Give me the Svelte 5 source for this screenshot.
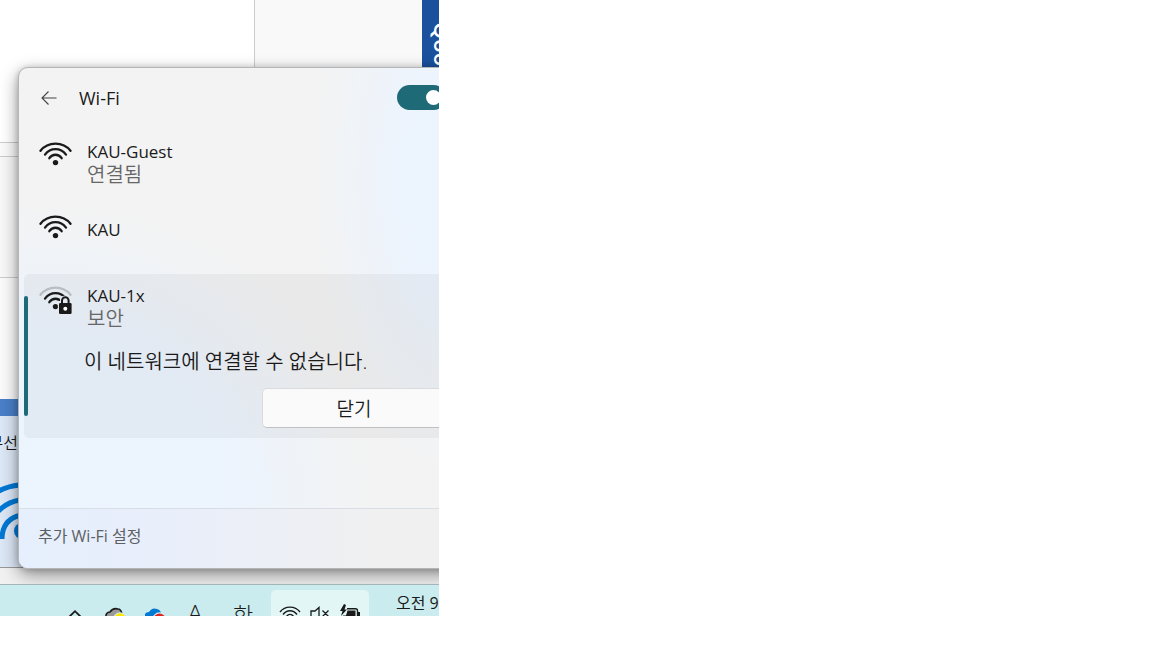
<script>
    let wifiOn = true;
    let errorOpen = true;

    const networks = [
        { name: "KAU-Guest", status: "연결됨" },
        { name: "KAU", status: "" }
    ];
</script>

<svelte:head>
    <title>Wi-Fi</title>
</svelte:head>

{#snippet wifi(weak)}
    <svg class="wifi-icon" viewBox="0 0 34 32" aria-hidden="true">
        <g fill="none" stroke="#1a1a1a" stroke-width="2.3" stroke-linecap="round">
            <path d="M1.500 10.8C9 1.300 24 1.300 31.500 10.8" stroke={weak ? "#b9bdc3" : "#1a1a1a"} />
            <path d="M6 14.6C11.500 7.400 21.500 7.400 27 14.6" />
            <path d="M10.300 18.2C13.500 13.600 19.500 13.600 22.700 18.2" />
        </g>
        <circle cx="16.500" cy="22.6" r="2.7" fill="#1a1a1a" />
        {#if weak}
            <path d="M18.800 17H21V14.5Q21.500 12 26 11.5L34 13V32H19Z" fill="#e4e9f2" />
            <path d="M23 20V16.5a3.3 3.3 0 0 1 6.6 0V20" fill="none" stroke="#1a1a1a" stroke-width="2" />
            <rect x="20" y="19" width="12.6" height="11" rx="1.2" fill="#1a1a1a" />
            <circle cx="26.3" cy="24.7" r="2" fill="#fff" />
        {/if}
    </svg>
{/snippet}

<main class="screen">
    <div class="desktop">
        <div class="windows">
            <div class="page">
                <div class="blank"></div>
                <div class="side"><div class="banner">Qoo</div></div>
            </div>
            <div class="strip"></div>
            <div class="pane"></div>
            <div class="pane lower"></div>
            <div class="bar"></div>
            <div class="popup">
                <span>무선</span>
                <svg viewBox="0 0 80 60" aria-hidden="true">
                    <g fill="none" stroke="#0078d4" stroke-width="5">
                        <path d="M6 20C16 10 28 4 42 3" />
                        <path d="M14 38C20 27 30 20 42 18" />
                        <path d="M24 57C24 45 30 36 43 33" />
                    </g>
                    <circle cx="44" cy="49" r="8" fill="#0078d4" />
                </svg>
            </div>
        </div>

        <section class="flyout">
            <header>
                <button class="back" aria-label="뒤로">
                    <svg viewBox="0 0 16 16" aria-hidden="true">
                        <path d="M15.5 8H1M7.5 1.5L1 8l6.5 6.5" fill="none" stroke="#444" stroke-width="1.1" />
                    </svg>
                </button>
                <label for="wifi-toggle">Wi-Fi</label>
                <input id="wifi-toggle" type="checkbox" role="switch" bind:checked={wifiOn} />
            </header>

            <ul>
                {#each networks as network}
                    <li class="network">
                        {@render wifi(false)}
                        <div class="info" class:single={!network.status}>
                            <span class="name">{network.name}</span>
                            {#if network.status}<span class="status">{network.status}</span>{/if}
                        </div>
                    </li>
                {/each}
                <li class="network selected">
                    {@render wifi(true)}
                    <div class="info">
                        <span class="name">KAU-1x</span>
                        <span class="status">보안</span>
                    </div>
                    {#if errorOpen}
                        <p>이 네트워크에 연결할 수 없습니다.</p>
                        <button class="close" on:click={() => (errorOpen = false)}>닫기</button>
                    {/if}
                </li>
            </ul>

            <footer><a href="#settings">추가 Wi-Fi 설정</a></footer>
        </section>
    </div>

    <nav class="taskbar">
        <button class="tray" aria-label="숨겨진 아이콘 표시">
            <svg viewBox="0 0 24 32" aria-hidden="true">
                <path d="M5 33l7-6.8 7 6.8" fill="none" stroke="#1a1a1a" stroke-width="1.8" />
            </svg>
        </button>
        <button class="tray" aria-label="클라우드">
            <svg viewBox="0 0 24 32" aria-hidden="true">
                <path d="M3 34v-4q1-3 4-3q3-4.500 8-3q3 0 4 5v5z" fill="#999" stroke="#1a1a1a" stroke-width="1.6" />
                <circle cx="17" cy="34" r="6.800" fill="#cdeeee" />
                <circle cx="17" cy="34" r="5.800" fill="#ffe600" />
            </svg>
        </button>
        <button class="tray" aria-label="OneDrive">
            <svg viewBox="0 0 24 32" aria-hidden="true">
                <path d="M2 34v-5q1-2 4-2q3-5 8-3q4 1 4 5v5z" fill="#0078d4" />
                <circle cx="16.500" cy="34.500" r="7.200" fill="#cdeeee" />
                <circle cx="16.500" cy="34.500" r="6" fill="#dc2626" />
                <path d="M14 31l5 5m0-5l-5 5" stroke="#fff" stroke-width="1" />
            </svg>
        </button>
        <button class="tray latin">A</button>
        <button class="tray hangul">한</button>
        <button class="quick" aria-label="네트워크, 볼륨, 배터리">
            <svg viewBox="0 0 22 26" aria-hidden="true">
                <g fill="none" stroke="#1a1a1a" stroke-width="1.400">
                    <path d="M1 22C6 15.500 16 15.500 21 22" />
                    <path d="M4 24.500C8 19.500 14 19.500 18 24.500" />
                    <path d="M7 27C9.500 23.500 12.500 23.500 15 27" />
                </g>
            </svg>
            <svg viewBox="0 0 22 26" aria-hidden="true">
                <path d="M2 27v-6h4l4-3.500V27M13.500 20.500l6 6m0-6l-6 6" fill="none" stroke="#1a1a1a" stroke-width="1.300" />
            </svg>
            <svg viewBox="0 0 22 26" aria-hidden="true">
                <path d="M8 18.700h8.500q2 0 2 2V27" fill="none" stroke="#1a1a1a" stroke-width="1.400" />
                <path d="M8.500 20.500h8V27H4v-1.500h3zM19 22h2v5h-2z" fill="#1a1a1a" />
                <path d="M5 14L1 21h2.500L2 26l6-6.500H5.500L7 15z" fill="#1a1a1a" />
            </svg>
        </button>
        <time>오전 9</time>
    </nav>
</main>

<style>
    :global(body) {
        margin: 0;
        background: #fff;
    }
    .screen {
        max-width: 439px;
        overflow: hidden;
        font-family: "Open Sans", "Noto Sans CJK KR", sans-serif;
        color: #1a1a1a;
    }
    button, input {
        margin: 0;
        padding: 0;
        border: 0;
        background: none;
        font: inherit;
        color: inherit;
    }
    svg {
        display: block;
    }
    .desktop {
        position: relative;
        padding: 67px 0 15px 18px;
        border-bottom: 1px solid #a3b5b7;
        background: #f1f1f1;
        overflow: hidden;
    }
    .windows {
        position: absolute;
        inset: 0;
        display: flex;
        flex-direction: column;
    }
    .page {
        display: flex;
        height: 142px;
        background: #fff;
    }
    .blank {
        flex: 0 0 254px;
    }
    .side {
        display: flex;
        flex: 1;
        justify-content: flex-end;
        border-left: 1px solid #ccc;
        background: #f9f9f9;
    }
    .banner {
        box-sizing: border-box;
        width: 17px;
        padding: 22px 0 0 7px;
        background: #1a509c;
        color: #fff;
        font-size: 22px;
        font-weight: 600;
        line-height: 28px;
        writing-mode: vertical-lr;
        overflow: hidden;
    }
    .strip {
        height: 13px;
        border-top: 1px solid #ccc;
        background: #fafafa;
    }
    .pane {
        height: 120px;
        border-top: 1px solid #ccc;
        background: #f8f8f8;
    }
    .pane.lower {
        height: 121px;
        background: #fbfbfb;
    }
    .bar {
        height: 17px;
        background: #4a80c9;
    }
    .popup {
        flex: 0 0 151px;
        border-bottom: 1px solid #999;
        background: #dde8f7;
        font-size: 16px;
    }
    .popup span {
        display: block;
        width: 18px;
        padding-top: 16px;
        font-weight: 350;
        line-height: 22px;
        direction: rtl;
        white-space: nowrap;
    }
    .popup svg {
        width: 80px;
        height: 60px;
        margin: 28px 0 0 -22px;
    }
    .flyout {
        position: relative;
        margin-right: -40px;
        border: 1px solid #b4b6b8;
        border-radius: 10px;
        background:
            radial-gradient(ellipse 150px 300px at 96% 22%, #ecf4fe 35%, #ecf4fe00 100%),
            radial-gradient(ellipse 330px 290px at 5% 85%, #ecf4fe 55%, #ecf4fe00 100%),
            #f3f3f3;
        box-shadow: 0 6px 18px #0006, 0 1px 6px #0003;
        overflow: hidden;
    }
    header {
        display: flex;
        align-items: center;
        height: 59px;
        padding: 0 35px 0 22px;
    }
    .back {
        width: 16px;
        height: 16px;
    }
    header label {
        flex: 1;
        margin-left: 22px;
        font-size: 18px;
        line-height: 24px;
    }
    header input {
        appearance: none;
        width: 49px;
        height: 25px;
        margin-right: -3px;
        border-radius: 13px;
        background: #8a8a8a;
    }
    header input::before {
        content: "";
        display: block;
        width: 15px;
        height: 15px;
        margin: 5px;
        border-radius: 50%;
        background: #fff;
    }
    header input:checked {
        background: #1f6a77;
    }
    header input:checked::before {
        margin-left: 29px;
    }
    ul {
        margin: 0;
        padding: 0 5px;
        list-style: none;
    }
    .network {
        display: grid;
        grid-template-columns: 34px 1fr;
        column-gap: 14px;
        align-content: start;
        min-height: 60px;
        padding: 13px 0 0 15px;
    }
    .network + .network:not(.selected) {
        min-height: 61px;
    }
    .wifi-icon {
        width: 34px;
        height: 32px;
    }
    .info {
        display: flex;
        flex-direction: column;
        line-height: 23px;
    }
    .info.single {
        padding-top: 5px;
    }
    .name {
        font-size: 17px;
    }
    .status {
        color: #666;
        font-size: 20px;
        font-weight: 350;
    }
    .selected {
        position: relative;
        box-sizing: border-box;
        padding-top: 10px;
        padding-bottom: 10px;
        border-radius: 5px;
        background: #1010180b;
    }
    .selected::before {
        content: "";
        position: absolute;
        top: 22px;
        bottom: 22px;
        left: 0;
        width: 4px;
        border-radius: 2px;
        background: #1f6a77;
    }
    .selected p {
        grid-column: 1 / -1;
        margin: 18px 0 12px 45px;
        font-size: 20px;
        font-weight: 350;
        line-height: 28px;
    }
    .close {
        grid-column: 1 / -1;
        justify-self: end;
        width: 184px;
        height: 40px;
        margin-right: 27px;
        border: 1px solid #d8dadd;
        border-bottom-color: #bfc1c4;
        border-radius: 5px;
        background: #fafafb;
        font-size: 19px;
        font-weight: 350;
    }
    footer {
        margin-top: 70px;
        padding: 15px 19px 20px;
        border-top: 1px solid #d9dee6;
        background: linear-gradient(90deg, #e6effd, #e9eefa 35%, #f0f0f0 80%);
        line-height: 24px;
    }
    footer a {
        color: #5c5f64;
        font-size: 16px;
        text-decoration: none;
    }
    .taskbar {
        display: flex;
        height: 31px;
        padding-left: 63px;
        background: #cbecee;
        overflow: hidden;
    }
    .tray {
        flex: 0 0 24px;
        height: 31px;
        margin-right: 16px;
    }
    .tray svg {
        width: 24px;
        height: 32px;
    }
    .latin, .hangul {
        height: 56px;
        font-size: 22px;
        font-weight: 300;
    }
    .latin {
        font-size: 26px;
    }
    .hangul {
        margin: 0 16px 0 8px;
    }
    .quick {
        display: flex;
        flex: 0 0 98px;
        justify-content: space-between;
        box-sizing: border-box;
        height: 36px;
        margin-top: 5px;
        padding: 0 8px;
        border-radius: 5px;
        background: #e3f6f6;
    }
    .quick svg {
        width: 22px;
        height: 26px;
    }
    time {
        margin-left: 27px;
        font-size: 16px;
        line-height: 36px;
        white-space: nowrap;
    }
</style>
